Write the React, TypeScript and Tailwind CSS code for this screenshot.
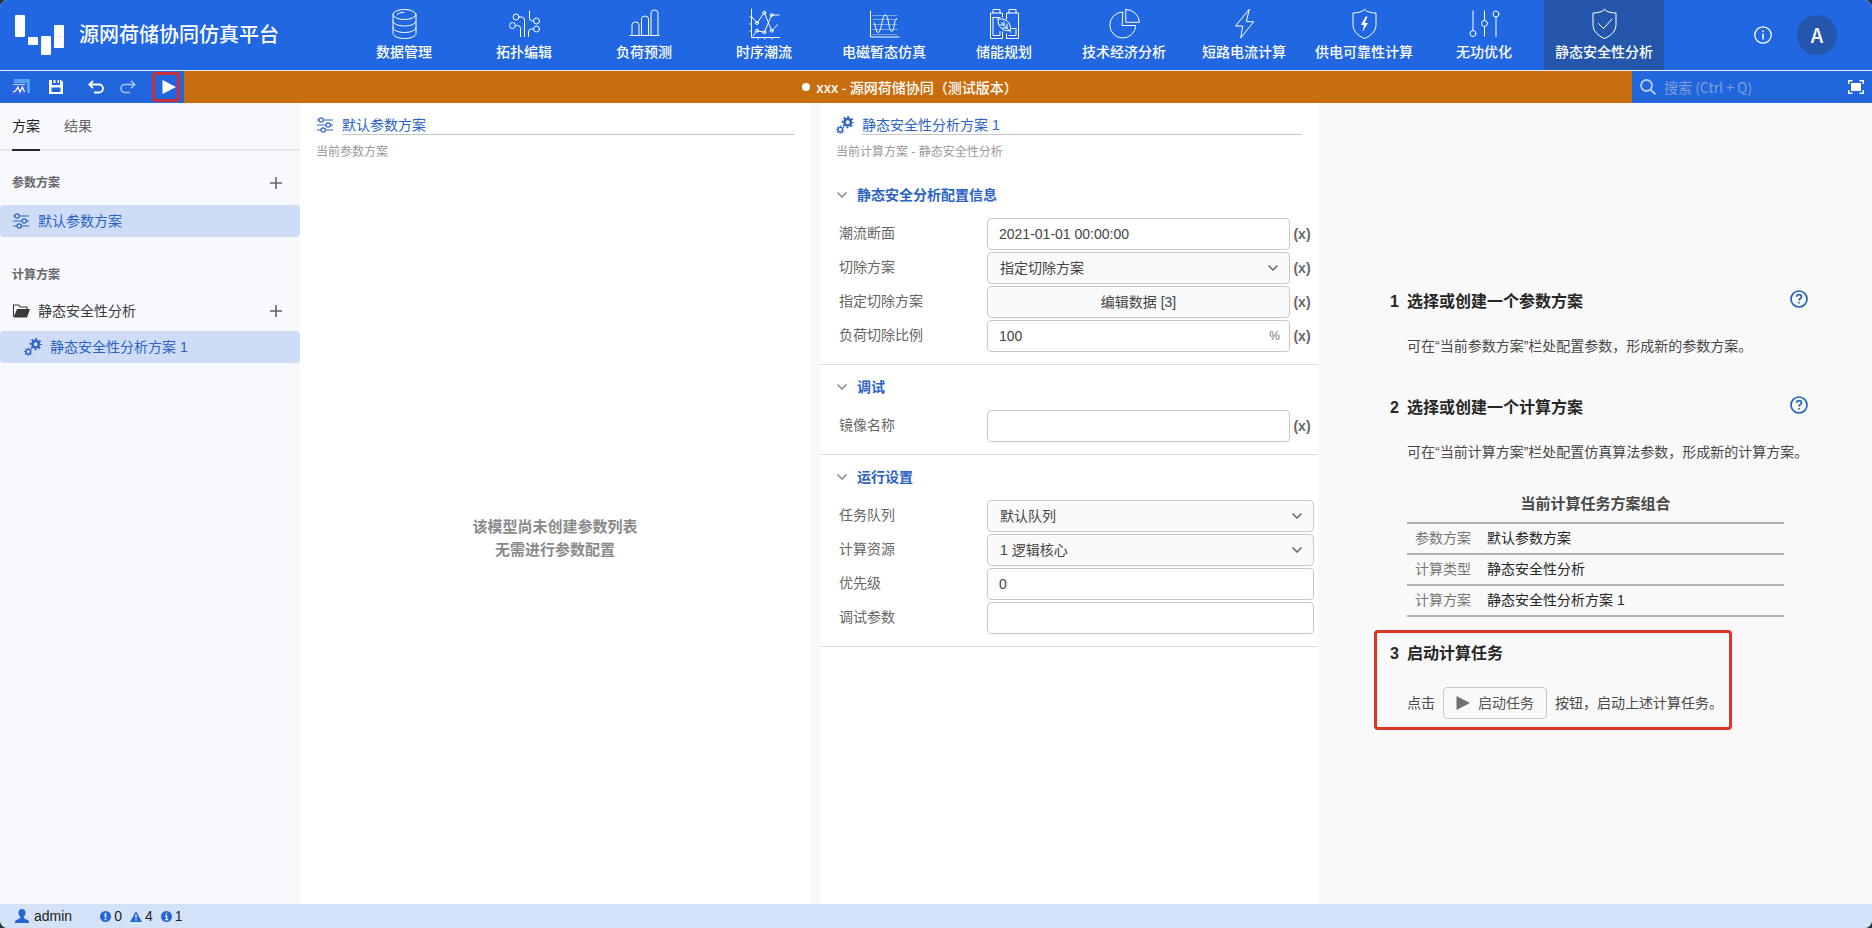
import React, { useState } from "react";
import clsx from "clsx";

type IconProps = { className?: string };

/* ---------- navigation icons, 30x30 grid ---------- */

function NavIcon({ children }: { children: React.ReactNode }) {
  return (
    <svg
      viewBox="0 0 31 30"
      className="h-[30px] w-[31px] overflow-visible"
      fill="none"
      stroke="currentColor"
      strokeLinecap="round"
      strokeLinejoin="round"
      aria-hidden="true"
    >
      {children}
    </svg>
  );
}

const DatabaseIcon = () => (
  <NavIcon>
    <ellipse cx="15.5" cy="5.5" rx="11.5" ry="5" />
    <path d="M4 5.5v19c0 2.8 5.1 5 11.5 5S27 27.3 27 24.5v-19" />
    <path d="M4 12c0 2.8 5.1 5 11.5 5S27 14.8 27 12M4 18.5c0 2.8 5.1 5 11.5 5S27 21.3 27 18.5" />
    <path d="M8 5.5c1.5-1.5 4-2 7-2" />
  </NavIcon>
);

const TopologyIcon = () => (
  <NavIcon>
    <circle cx="7" cy="8" r="3" />
    <circle cx="3.5" cy="16.5" r="3" />
    <circle cx="27.5" cy="12" r="3" />
    <circle cx="27.5" cy="20" r="3" />
    <path d="M10 8h2.5q3 0 3 3v16.5M6.5 16.5h2q3 0 3 3v8" />
    <path d="M20.5 2v7q0 3 3 3h1M19.5 27.5V23q0-3 3-3h2" />
  </NavIcon>
);

const BarsIcon = () => (
  <NavIcon>
    <path d="M1 26.5h29" />
    <path d="M3 26V16q0-3 3.5-3t3.5 3v10M12.5 26V10q0-3 3.5-3t3.5 3v16M22 26V4q0-3 3.5-3T29 4v22" />
  </NavIcon>
);

const TimeSeriesIcon = () => (
  <NavIcon>
    <path d="M2.5 0v28.5h28M1 8h1.5M1 15h1.5M1 22h1.5M9 28.5v1.5M16 28.5v1.5M23 28.5v1.5" />
    <path d="M3 8l5 6 7.3-10.3 7.4 18 6-6" />
    <path d="M4 27l4-5.3 7.3 1.6L22.7 6H30" />
    <circle cx="8" cy="14" r="1.5" />
    <circle cx="15.3" cy="3.7" r="1.5" />
    <circle cx="22.7" cy="21.7" r="1.5" />
    <circle cx="8" cy="21.7" r="1.5" />
    <circle cx="15.3" cy="23.3" r="1.5" />
    <circle cx="22.7" cy="6" r="1.5" />
  </NavIcon>
);

const WaveIcon = () => (
  <NavIcon>
    <path d="M1.5 2v26H30" />
    <path d="M4 6.5h24M4 10.5h24M4 15.5h24M4 20.5h24M4 25.5h24" strokeWidth="0.4" />
    <path d="M5 13.5c1.500 0 1.500 10 4 10 4 0 3.500-17.500 7.300-17.500 3.700 0 3 16.500 6.400 16.500 3 0 2-13 5-13" />
  </NavIcon>
);

const BatteryIcon = () => (
  <NavIcon>
    <path d="M4 4V.5h7V4M20 4V.5h7V4" />
    <path d="M13.5 8V4h-12v25.500h12V23M17.500 10V4h12v25.500h-12V25" />
    <path d="M4 8.500v18h7v-4M11 8.500H4M20 26.500h7v-7h-4" />
    <path d="M9 10c8-1 13 3 12.500 11.500C14 23 8.500 18 9 10zM12.500 13.500L22 23.500M15 16v-3.500M18 19v-4M14.800 16h-4M17.500 19h-4" />
  </NavIcon>
);

const PieIcon = () => (
  <NavIcon>
    <path d="M13.500 3a13 13 0 1 0 13.300 13.500H13.500z" />
    <path d="M16.800.5v12.800h13.700A13.500 13.500 0 0 0 16.800.5z" />
  </NavIcon>
);

const BoltIcon = () => (
  <NavIcon>
    <path d="M20 .5L6.500 17h7.200l-2 12L24.700 12.700h-7z" />
  </NavIcon>
);

const SHIELD = "M15.5.5c2.500 2.500 6 3.300 11.500 3.500v11.500c0 6.500-4.500 11-11.500 14-7-3-11.500-7.500-11.500-14V4c5.500-.2 9-1 11.500-3.500z";

const ShieldBoltIcon = () => (
  <NavIcon>
    <path d={SHIELD} />
    <path d="M16.500 7.500L12 16h3l-1.500 7 5.500-9h-3.200l2.700-6.500z" fill="currentColor" stroke="none" />
  </NavIcon>
);

const TuneIcon = () => (
  <NavIcon>
    <path d="M4 2v19.500M15.500 2v9.500M15.500 17.500v9.500M27 8v19.500" />
    <circle cx="4" cy="24.500" r="3" />
    <circle cx="15.500" cy="14.500" r="3" />
    <circle cx="27" cy="5" r="3" />
  </NavIcon>
);

const ShieldCheckIcon = () => (
  <NavIcon>
    <path d={SHIELD} />
    <path d="M9.500 14.500l5 5 8.500-9.500" />
  </NavIcon>
);

const NAV_ITEMS = [
  { label: "数据管理", Icon: DatabaseIcon },
  { label: "拓扑编辑", Icon: TopologyIcon },
  { label: "负荷预测", Icon: BarsIcon },
  { label: "时序潮流", Icon: TimeSeriesIcon },
  { label: "电磁暂态仿真", Icon: WaveIcon },
  { label: "储能规划", Icon: BatteryIcon },
  { label: "技术经济分析", Icon: PieIcon },
  { label: "短路电流计算", Icon: BoltIcon },
  { label: "供电可靠性计算", Icon: ShieldBoltIcon },
  { label: "无功优化", Icon: TuneIcon },
  { label: "静态安全性分析", Icon: ShieldCheckIcon },
];

/* ---------- small icons ---------- */

const SlidersIcon = ({ className }: IconProps) => (
  <svg viewBox="0 0 18 16" className={clsx("h-4 w-[18px] shrink-0", className)} fill="none" stroke="currentColor" strokeWidth="1.2" aria-hidden="true">
    <path d="M1 3h2M7.500 3H17M1 8h9M14.500 8H17M1 13h4M9.500 13H17" />
    <circle cx="5.200" cy="3" r="2.200" />
    <circle cx="12.200" cy="8" r="2.200" />
    <circle cx="7.200" cy="13" r="2.200" />
  </svg>
);

const GearsIcon = ({ className }: IconProps) => (
  <svg viewBox="0 0 18 18" className={clsx("h-[18px] w-[18px] shrink-0", className)} fill="none" stroke="currentColor" aria-hidden="true">
    <circle cx="11.700" cy="6.200" r="3.200" strokeWidth="2.400" />
    <circle cx="11.700" cy="6.200" r="5.100" strokeWidth="2" strokeDasharray="2 2.005" strokeDashoffset="1" />
    <circle cx="4.300" cy="13.700" r="2.300" strokeWidth="1.400" />
    <circle cx="4.300" cy="13.700" r="3.500" strokeWidth="1.400" strokeDasharray="1.200 1.549" strokeDashoffset="0.600" />
  </svg>
);

const FolderIcon = () => (
  <svg viewBox="0 0 18 14" className="h-[14px] w-[18px] shrink-0" fill="none" aria-hidden="true">
    <path d="M1.500 12.500V1h5l2 2h6.500v2.500" stroke="currentColor" strokeWidth="1.100" />
    <path d="M5 5H18l-3 8.500H1.500z" fill="currentColor" />
  </svg>
);

const PlusIcon = () => (
  <svg viewBox="0 0 12 12" className="h-3 w-3" stroke="currentColor" strokeWidth="1.600" aria-hidden="true">
    <path d="M6 0v12M0 6h12" />
  </svg>
);

const ChevronIcon = ({ className }: IconProps) => (
  <svg viewBox="0 0 10 6" className={clsx("h-[6px] w-[10px]", className)} fill="none" stroke="currentColor" strokeWidth="1.500" aria-hidden="true">
    <path d="M.5.5L5 5 9.500.5" />
  </svg>
);

const PlayIcon = () => (
  <svg viewBox="0 0 14 14" className="h-[14px] w-[14px] shrink-0" fill="currentColor" aria-hidden="true">
    <path d="M.5 0L14 7 .5 14z" />
  </svg>
);

/* ---------- header ---------- */

function Header() {
  const [active, setActive] = useState("静态安全性分析");
  return (
    <header className="flex h-[70px] shrink-0 bg-[#2067e1] text-white">
      <div className="flex w-[344px] shrink-0 items-center gap-[15px] pl-[15px]">
        <svg viewBox="0 0 49 40" className="h-10 w-[49px]" fill="currentColor" aria-hidden="true">
          <rect x="0" y="0" width="10" height="22" rx="1" />
          <rect x="13" y="22" width="10" height="8" rx="1" />
          <rect x="26" y="21" width="10" height="19" rx="1" />
          <rect x="39" y="10" width="10" height="23" rx="1" />
          <path d="M39 21.500h10" stroke="#c9dcfb" strokeWidth="0.500" />
        </svg>
        <h1 className="pb-0.5 text-[20px] leading-6 font-medium">源网荷储协同仿真平台</h1>
      </div>
      <nav className="flex">
        {NAV_ITEMS.map(({ label, Icon }) => (
          <button
            key={label}
            type="button"
            onClick={() => setActive(label)}
            className={clsx(
              "flex w-[120px] flex-col items-center gap-0.5 pt-[9px] text-sm leading-5 font-medium",
              active === label && "bg-[#2457ab]"
            )}
          >
            <Icon />
            {label}
          </button>
        ))}
      </nav>
      <div className="ml-auto flex items-center gap-[25px] pr-[35px]">
        <button type="button" aria-label="关于">
          <svg viewBox="0 0 18 18" className="h-[18px] w-[18px]" fill="none" stroke="currentColor" strokeWidth="1.300" aria-hidden="true">
            <circle cx="9" cy="9" r="8.200" />
            <path d="M9 7.500V13.500M9 4.500v1.500" strokeWidth="1.500" />
          </svg>
        </button>
        <button type="button" className="h-10 w-10 rounded-full bg-[#2457ab] text-[20px] font-medium">
          A
        </button>
      </div>
    </header>
  );
}

function Toolbar() {
  return (
    <div className="mt-px flex h-8 shrink-0 bg-[#2166dc] text-white">
      <div className="flex w-[184px] shrink-0 items-center pl-3">
        <button type="button" aria-label="主页" className="mr-[19px]">
          <svg viewBox="0 0 18 16" className="h-4 w-[18px]" fill="none" aria-hidden="true">
            <path d="M2 0h16v14h-3V4H2z" fill="#4fa3f0" />
            <rect x="0" y="4" width="14" height="12" fill="#3464e8" />
            <path d="M1 5.500h12" stroke="#bcd6ff" />
            <path d="M1 13l2.500-1L6 8l2 5 2.500-5 2 5" stroke="#fff" strokeWidth="1.200" />
          </svg>
        </button>
        <button type="button" aria-label="保存" className="mr-[25px]">
          <svg viewBox="0 0 14 14" className="h-[14px] w-[14px]" aria-hidden="true">
            <path d="M0 0h3v5h8V0h1l2 2v12H0zM2.500 7.500v4.500h9V7.500z" fill="currentColor" fillRule="evenodd" />
            <path d="M4.500 0h2v3h-2zM8.500 0h1.500v3h-1.500z" fill="currentColor" />
          </svg>
        </button>
        <button type="button" aria-label="撤销" className="mr-4">
          <svg viewBox="0 0 16 14" className="h-[14px] w-4" fill="none" stroke="currentColor" strokeWidth="1.800" aria-hidden="true">
            <path d="M1 4.500h10a4 4 0 0 1 0 8H6M5 .800L1.300 4.500 5 8.200" />
          </svg>
        </button>
        <button type="button" aria-label="重做" className="mr-4 opacity-60">
          <svg viewBox="0 0 16 14" className="h-[14px] w-4" fill="none" stroke="currentColor" strokeWidth="1.600" aria-hidden="true">
            <path d="M15 4.500H5a4 4 0 0 0 0 8h5M11 .800l3.700 3.700L11 8.200" />
          </svg>
        </button>
        <button
          type="button"
          aria-label="启动任务"
          className="flex h-[30px] w-[28px] items-center justify-center rounded-sm border-[3px] border-[#c9303e] pl-1.5"
        >
          <PlayIcon />
        </button>
      </div>
      <div className="flex flex-1 items-center justify-center gap-1.5 bg-[#c96e0f] pl-1 text-sm font-medium">
        <span className="h-2 w-2 rounded-full bg-white" />
        <span>xxx - 源网荷储协同（测试版本）</span>
      </div>
      <div className="flex w-[240px] shrink-0 items-center pl-2">
        <label className="flex h-[26px] w-[192px] items-center gap-2 border-b border-[#345fb8]">
          <svg viewBox="0 0 16 16" className="h-4 w-4 text-[#b9cff5]" fill="none" stroke="currentColor" strokeWidth="1.800" aria-hidden="true">
            <circle cx="6.500" cy="6.500" r="5.500" />
            <path d="M10.500 10.500L15.500 15.500" />
          </svg>
          <input
            aria-label="搜索"
            placeholder="搜索 (Ctrl + Q)"
            className="min-w-0 flex-1 bg-transparent text-sm outline-none placeholder:text-[#7f9fd8]"
          />
        </label>
        <button type="button" aria-label="全屏" className="ml-4">
          <svg viewBox="0 0 16 14" className="h-[14px] w-4" fill="none" stroke="currentColor" strokeWidth="1.400" aria-hidden="true">
            <path d="M.7 4V.7H4.500M11.500.7h3.800V4M15.300 10v3.300h-3.800M4.500 13.300H.7V10" />
            <rect x="3" y="3" width="10" height="8" fill="currentColor" stroke="none" />
          </svg>
        </button>
      </div>
    </div>
  );
}

/* ---------- sidebar ---------- */

function Sidebar() {
  return (
    <aside className="bg-[#f8f9fd] text-sm">
      <div className="flex h-12 gap-6 border-b-2 border-[#e8e9ec] px-3" role="tablist">
        <button type="button" role="tab" aria-selected="true" className="-mb-0.5 border-b-2 border-[#25272c] text-[#1f2126]">
          方案
        </button>
        <button type="button" role="tab" aria-selected="false" className="-mb-0.5 border-b-2 border-transparent text-[#666]">
          结果
        </button>
      </div>

      <div className="flex flex-col gap-4 pt-2.5">
        <section>
          <div className="flex h-11 items-center justify-between pr-[18px] pl-3 text-[#66686c]">
            <h2 className="text-xs font-semibold">参数方案</h2>
            <button type="button" aria-label="新建参数方案">
              <PlusIcon />
            </button>
          </div>
          <button type="button" className="flex h-8 w-full items-center gap-2 rounded bg-[#cedcf6] pl-3 text-[#2b62c4]">
            <SlidersIcon />
            默认参数方案
          </button>
        </section>

        <section>
          <h2 className="flex h-11 items-center pl-3 text-xs font-semibold text-[#66686c]">计算方案</h2>
          <div className="flex flex-col gap-1.5">
            <div className="flex h-7 items-center gap-2 pr-[18px] pl-3 text-[#3a3a3a]">
              <FolderIcon />
              <span className="flex-1">静态安全性分析</span>
              <button type="button" aria-label="新建计算方案" className="text-[#5e6064]">
                <PlusIcon />
              </button>
            </div>
            <button type="button" className="flex h-8 w-full items-center gap-2 rounded bg-[#cedcf6] pl-6 text-[#2b62c4]">
              <GearsIcon />
              静态安全性分析方案 1
            </button>
          </div>
        </section>
      </div>
    </aside>
  );
}

/* ---------- scheme panels ---------- */

type PanelHeaderProps = {
  icon: React.ReactNode;
  name: string;
  caption: string;
  label: string;
};

function PanelHeader({ icon, name, caption, label }: PanelHeaderProps) {
  return (
    <div className="h-[70px] pt-3 pr-4 pl-4">
      <div className="flex items-center gap-2 text-[#2b62c4]">
        {icon}
        <input
          aria-label={label}
          defaultValue={name}
          className="h-5 min-w-0 flex-1 border-b border-[#c4c6ca] bg-transparent text-sm leading-5 outline-none"
        />
      </div>
      <p className="mt-2 text-xs leading-[18px] text-[#999]">{caption}</p>
    </div>
  );
}

function ParamPanel() {
  return (
    <section className="flex flex-col bg-white">
      <PanelHeader icon={<SlidersIcon />} label="参数方案名称" name="默认参数方案" caption="当前参数方案" />
      <div className="flex flex-1 items-center justify-center pb-0.5 text-center text-[15px] leading-[23px] font-bold text-[#8a8a8a]">
        <p>
          该模型尚未创建参数列表
          <br />
          无需进行参数配置
        </p>
      </div>
    </section>
  );
}

type Field = {
  id: string;
  label: string;
  kind: "text" | "select" | "button";
  value: string;
  unit?: string;
  expr?: boolean;
};

type FieldGroup = { title: string; fields: Field[] };

const GROUPS: FieldGroup[] = [
  {
    title: "静态安全分析配置信息",
    fields: [
      { id: "section", label: "潮流断面", kind: "text", value: "2021-01-01 00:00:00", expr: true },
      { id: "cut", label: "切除方案", kind: "select", value: "指定切除方案", expr: true },
      { id: "cut-data", label: "指定切除方案", kind: "button", value: "编辑数据 [3]", expr: true },
      { id: "ratio", label: "负荷切除比例", kind: "text", value: "100", unit: "%", expr: true },
    ],
  },
  {
    title: "调试",
    fields: [{ id: "image", label: "镜像名称", kind: "text", value: "", expr: true }],
  },
  {
    title: "运行设置",
    fields: [
      { id: "queue", label: "任务队列", kind: "select", value: "默认队列" },
      { id: "cores", label: "计算资源", kind: "select", value: "1 逻辑核心" },
      { id: "priority", label: "优先级", kind: "text", value: "0" },
      { id: "debug", label: "调试参数", kind: "text", value: "" },
    ],
  },
];

function Control({ field }: { field: Field }) {
  const base = "h-8 w-full rounded border border-[#c8c8c8] text-sm text-[#444] outline-none";

  if (field.kind === "select") {
    return (
      <>
        <select id={field.id} defaultValue={field.value} className={clsx(base, "appearance-none bg-[#fafafa] px-3")}>
          <option>{field.value}</option>
        </select>
        <ChevronIcon className="pointer-events-none absolute top-[13px] right-3 text-[#666]" />
      </>
    );
  }
  if (field.kind === "button") {
    return (
      <button id={field.id} type="button" className={clsx(base, "bg-[#fafafa]")}>
        {field.value}
      </button>
    );
  }
  return (
    <>
      <input id={field.id} defaultValue={field.value} className={clsx(base, "bg-white px-[11px]")} />
      {field.unit && <span className="absolute top-2 right-2.5 text-xs leading-4 text-[#777]">{field.unit}</span>}
    </>
  );
}

function CalcPanel() {
  return (
    <section className="bg-white">
      <PanelHeader icon={<GearsIcon />} label="计算方案名称" name="静态安全性分析方案 1" caption="当前计算方案 - 静态安全性分析" />
      {GROUPS.map((group) => (
        <div key={group.title} className="border-b border-[#dedede] pr-1 pb-3">
          <button type="button" className="flex h-[45px] items-center gap-2.5 pb-0.5 pl-[17px] text-sm font-bold text-[#2b62c4]">
            <ChevronIcon className="text-[#888]" />
            {group.title}
          </button>
          <div className="flex flex-col gap-0.5 pl-[19px]">
            {group.fields.map((field) => (
              <div key={field.id} className="flex h-8 items-center">
                <label htmlFor={field.id} className="w-[148px] shrink-0 pb-0.5 text-sm text-[#666]">
                  {field.label}
                </label>
                <div className="relative flex-1">
                  <Control field={field} />
                </div>
                {field.expr && (
                  <button type="button" aria-label="表达式" className="w-6 text-sm font-bold text-[#666]">
                    (x)
                  </button>
                )}
              </div>
            ))}
          </div>
        </div>
      ))}
    </section>
  );
}

/* ---------- guide ---------- */

const SUMMARY = [
  ["参数方案", "默认参数方案"],
  ["计算类型", "静态安全性分析"],
  ["计算方案", "静态安全性分析方案 1"],
];

function StepTitle({ index, children, help }: { index: number; children: React.ReactNode; help?: boolean }) {
  return (
    <div className="flex h-6 justify-between">
      <h3 className="flex text-base leading-6 font-bold text-[#262626]">
        <span className="w-[17px]">{index}</span>
        {children}
      </h3>
      {help && (
        <button type="button" aria-label="帮助" className="h-[18px] text-[#2464b8]">
          <svg viewBox="0 0 18 18" className="h-[18px] w-[18px]" fill="none" stroke="currentColor" strokeWidth="1.700" aria-hidden="true">
            <circle cx="9" cy="9" r="8" />
            <path d="M6.500 6.800C6.700 5.300 7.700 4.600 9 4.600c1.500 0 2.500.8 2.500 2.100C11.500 8.500 9 8.500 9 10.500M9 12v1.600" />
          </svg>
        </button>
      )}
    </div>
  );
}

function Guide() {
  return (
    <section className="flex flex-col items-center justify-center bg-[#f9f9f9] pt-[13px] text-sm text-[#484848]">
      <div className="w-full max-w-[442px]">
        <div className="pr-2 pl-4">
          <StepTitle index={1} help>
            选择或创建一个参数方案
          </StepTitle>
          <p className="mt-5 pl-[17px] leading-6">可在“当前参数方案”栏处配置参数，形成新的参数方案。</p>
        </div>
        <div className="mt-[38px] pr-2 pl-4">
          <StepTitle index={2} help>
            选择或创建一个计算方案
          </StepTitle>
          <p className="mt-5 pl-[17px] leading-6 whitespace-nowrap">可在“当前计算方案”栏处配置仿真算法参数，形成新的计算方案。</p>
        </div>

        <div className="mt-7 pr-8 pl-[33px]">
          <table className="w-full border-collapse text-left">
            <caption className="pb-[6px] text-[15px] leading-6 font-bold">当前计算任务方案组合</caption>
            <tbody>
              {SUMMARY.map(([key, value]) => (
                <tr key={key} className="h-[31px] border-y-2 border-[#b0b0b0]">
                  <th scope="row" className="w-[80px] pb-0.5 pl-2 font-normal text-[#777]">
                    {key}
                  </th>
                  <td className="pb-0.5 text-[#262626]">{value}</td>
                </tr>
              ))}
            </tbody>
          </table>
        </div>

        <div className="mt-[13px] w-fit rounded-sm border-[3px] border-[#dc3528] pt-[9px] pr-1.5 pb-2 pl-[13px]">
          <StepTitle index={3}>启动计算任务</StepTitle>
          <div className="mt-[21px] flex items-center gap-2 pl-[17px] leading-6">
            点击
            <button type="button" className="flex h-8 items-center gap-2 rounded border border-[#c8c8c8] px-3 text-[#555]">
              <span className="text-[#707070]">
                <PlayIcon />
              </span>
              启动任务
            </button>
            按钮，启动上述计算任务。
          </div>
        </div>
      </div>
    </section>
  );
}

/* ---------- status bar ---------- */

function StatusBar() {
  return (
    <footer className="flex h-6 shrink-0 items-center bg-[#d4e2f8] pl-[15px] text-sm text-[#222]">
      <svg viewBox="0 0 14 14" className="mr-[5px] h-[14px] w-[14px] text-[#2765d4]" fill="currentColor" aria-hidden="true">
        <path d="M7 0c2.200 0 3.500 1.600 3.500 3.800 0 1.700-.7 3.200-1.700 4 0 1.200.2 1.500 1.200 2 2 .9 4 1.500 4 3v1.200H0v-1.200c0-1.500 2-2.100 4-3 1-.5 1.200-.8 1.200-2-1-.8-1.700-2.300-1.700-4C3.500 1.600 4.800 0 7 0z" />
      </svg>
      <span className="mr-7">admin</span>
      <div className="flex items-center gap-2">
        <span className="flex items-center gap-[3px]">
          <svg viewBox="0 0 11 11" className="h-[11px] w-[11px]" aria-hidden="true">
            <circle cx="5.500" cy="5.500" r="5.500" fill="#2765d4" />
            <path d="M5.500 2v4.500M5.500 7.500v1.700" stroke="#e6effc" strokeWidth="1.700" />
          </svg>
          0
        </span>
        <span className="flex items-center gap-[3px]">
          <svg viewBox="0 0 12 11" className="h-[11px] w-3" aria-hidden="true">
            <path d="M6 0l6 11H0z" fill="#2765d4" />
            <path d="M6 3.500v3.500M6 8v1.500" stroke="#e6effc" strokeWidth="1.400" />
          </svg>
          4
        </span>
        <span className="flex items-center gap-[3px]">
          <svg viewBox="0 0 11 11" className="h-[11px] w-[11px]" aria-hidden="true">
            <circle cx="5.500" cy="5.500" r="5.500" fill="#2765d4" />
            <path d="M5.500 1.700v1.600M4 5h1.700v3.500M4 8.700h3.200" stroke="#e6effc" strokeWidth="1.300" fill="none" />
          </svg>
          1
        </span>
      </div>
    </footer>
  );
}

export default function App() {
  return (
    <div className="h-screen bg-[#27333f]">
      <div className="flex h-full flex-col overflow-hidden rounded-lg bg-[#e9eef5]">
        <div className="font-['Noto_Sans_CJK_SC',sans-serif]">
          <Header />
          <Toolbar />
        </div>
        <main className="grid min-h-0 flex-1 grid-cols-[300px_510fr_508fr_554fr] font-['Liberation_Sans','Noto_Sans_CJK_SC',sans-serif]">
          <Sidebar />
          <ParamPanel />
          <div className="grid border-l-[10px] border-[#f8f9fd]">
            <CalcPanel />
          </div>
          <Guide />
        </main>
        <div className="font-['Liberation_Sans','Noto_Sans_CJK_SC',sans-serif]">
          <StatusBar />
        </div>
      </div>
    </div>
  );
}
